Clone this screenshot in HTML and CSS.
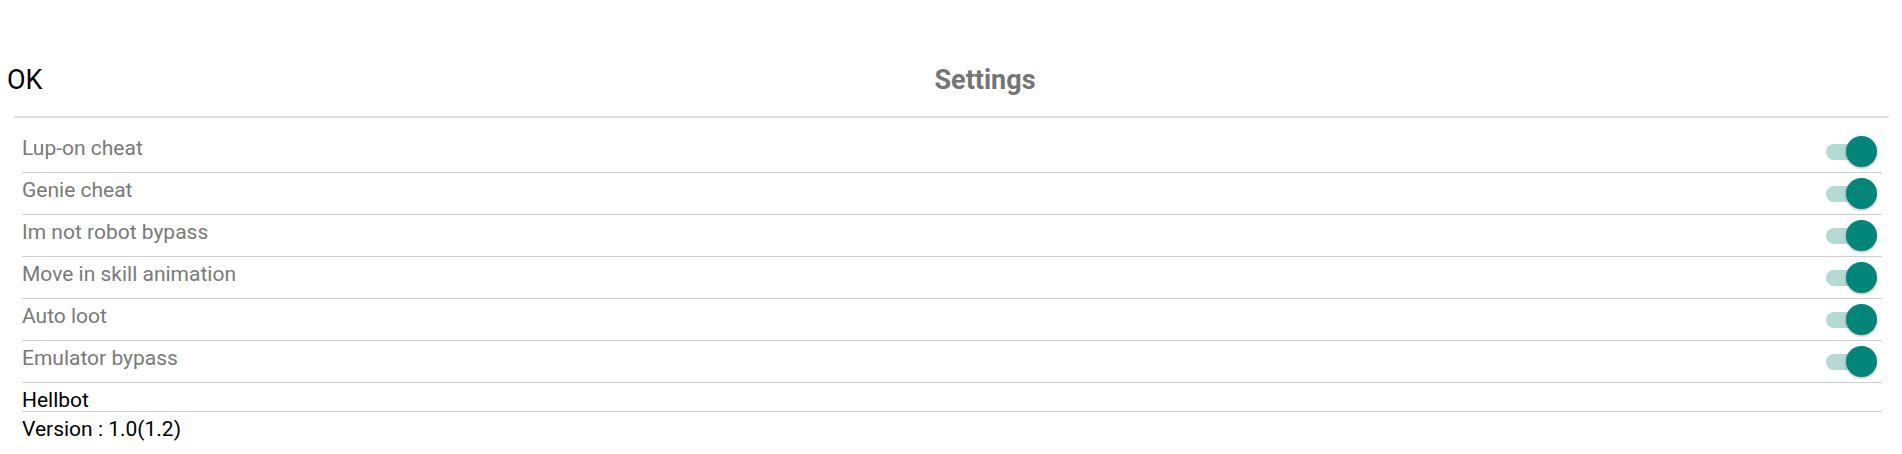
FILE: index.html
```html
<!DOCTYPE html>
<html lang="en">
<head>
    <meta charset="UTF-8">
    <meta name="viewport" content="width=device-width, initial-scale=1.0">
    <title>Settings</title>
    <link rel="stylesheet" href="styles.css">
</head>
<body>

    <div class="header">
        <div class="ok-btn">OK</div>
        <div class="title">Settings</div>
    </div>
    <div class="divider"></div>

    <div class="settings-list">
        <div class="setting-row">
            <span class="setting-label">Lup-on cheat</span>
            <div class="switch"><span class="switch-track"></span><span class="switch-thumb"></span></div>
        </div>
        <div class="setting-row">
            <span class="setting-label">Genie cheat</span>
            <div class="switch"><span class="switch-track"></span><span class="switch-thumb"></span></div>
        </div>
        <div class="setting-row">
            <span class="setting-label">Im not robot bypass</span>
            <div class="switch"><span class="switch-track"></span><span class="switch-thumb"></span></div>
        </div>
        <div class="setting-row">
            <span class="setting-label">Move in skill animation</span>
            <div class="switch"><span class="switch-track"></span><span class="switch-thumb"></span></div>
        </div>
        <div class="setting-row">
            <span class="setting-label">Auto loot</span>
            <div class="switch"><span class="switch-track"></span><span class="switch-thumb"></span></div>
        </div>
        <div class="setting-row">
            <span class="setting-label">Emulator bypass</span>
            <div class="switch"><span class="switch-track"></span><span class="switch-thumb"></span></div>
        </div>
        <div class="info-row">Hellbot</div>
        <div class="version">Version : 1.0(1.2)</div>
    </div>

</body>
</html>
```

FILE: styles.css
```css
body {
    font-family: Roboto, "Liberation Sans", sans-serif;
    margin: 0;
    background: #fff;
}

.header {
    display: flex;
    align-items: center;
    height: 116px;
    padding-top: 44px;
    box-sizing: border-box;
}

.ok-btn {
    width: 68px;
    padding-left: 7px;
    box-sizing: border-box;
    font-size: 27px;
    color: #000;
}

.title {
    flex: 1;
    text-align: center;
    font-size: 27px;
    font-weight: bold;
    color: #757575;
}

.divider {
    height: 2px;
    margin: 0 13px 0 14px;
    background: #e0e0e0;
}

.settings-list {
    margin: 13px 20px 0 22px;
}

.setting-row {
    display: flex;
    justify-content: space-between;
    align-items: flex-start;
    height: 41px;
    border-bottom: 1px solid #cfcfcf;
}

.setting-label {
    padding-top: 5px;
    font-size: 21px;
    color: #7a7a7a;
}

.switch {
    position: relative;
    align-self: center;
    width: 51px;
    height: 31px;
    margin-right: 5px;
}

.switch-track {
    position: absolute;
    left: 0;
    top: 8px;
    width: 46px;
    height: 16px;
    border-radius: 8px;
    background: #b4dad6;
}

.switch-thumb {
    position: absolute;
    right: 0;
    top: 0;
    width: 31px;
    height: 31px;
    border-radius: 50%;
    background: #03857a;
    box-shadow: 0 1px 3px rgba(0, 0, 0, 0.3);
}

.info-row {
    height: 29px;
    padding-top: 5px;
    box-sizing: border-box;
    border-bottom: 1px solid #cfcfcf;
    font-size: 21px;
    color: #000;
}

.version {
    padding-top: 5px;
    font-size: 21px;
    color: #000;
}
```
